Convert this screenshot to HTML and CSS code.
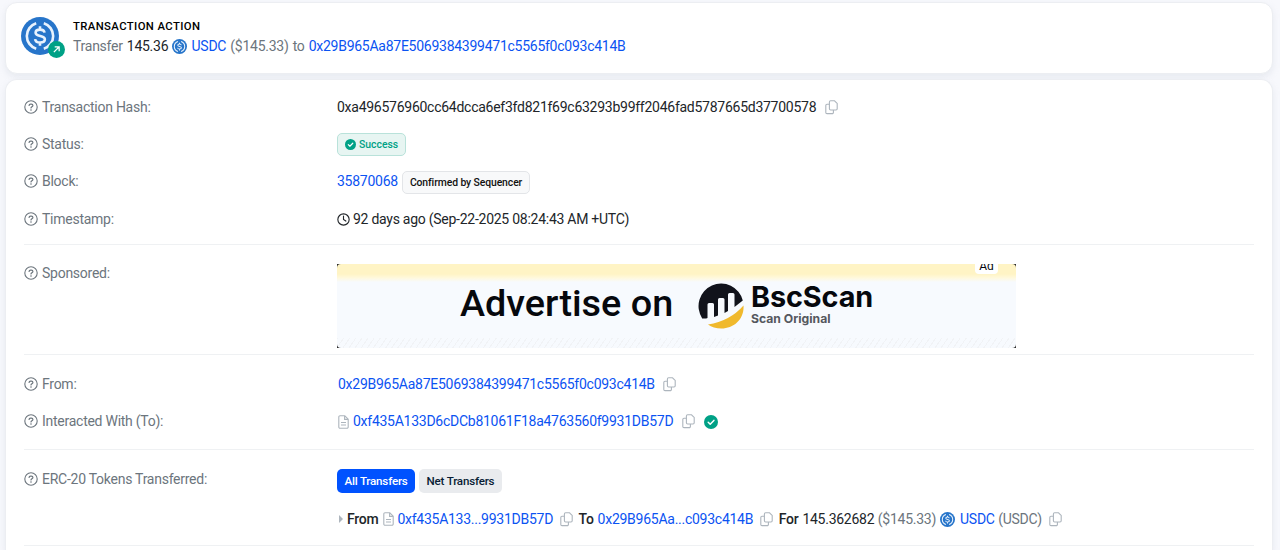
FILE: index.html
```html
<!DOCTYPE html>
<html lang="en">
<head>
    <meta charset="UTF-8">
    <title>Transaction Details</title>
    <link rel="stylesheet" href="styles.css">
</head>
<body>

    <svg class="sprite">
        <symbol id="help" viewBox="0 0 14 14">
            <circle cx="7" cy="7" r="6.2" fill="none" stroke="currentColor" stroke-width="1.1"/>
            <path d="M5.1 5.5c0-.9.7-1.4 1.5-1.4h.8c.9 0 1.5.6 1.5 1.4 0 1.3-1.9 1.4-1.9 2.5" fill="none" stroke="currentColor" stroke-width="1.2" stroke-linecap="round"/>
            <circle cx="7" cy="10" r=".8" fill="currentColor"/>
        </symbol>
        <symbol id="copy" viewBox="0 0 13 15">
            <path d="M5.6.8h3.9l2.7 2.6v5.4a1.2 1.2 0 0 1-1.2 1.2H5.6a1.2 1.2 0 0 1-1.2-1.2V2A1.2 1.2 0 0 1 5.6.8z" fill="none" stroke="currentColor" stroke-width="1.1"/>
            <path d="M4.4 4.2H2A1.2 1.2 0 0 0 .8 5.4v7A1.2 1.2 0 0 0 2 13.6h5.2a1.2 1.2 0 0 0 1.2-1.2V10" fill="none" stroke="currentColor" stroke-width="1.1"/>
        </symbol>
        <symbol id="file" viewBox="0 0 11 14">
            <path d="M2 .8h4.8l3.4 3.4V12a1.2 1.2 0 0 1-1.2 1.2H2A1.2 1.2 0 0 1 .8 12V2A1.2 1.2 0 0 1 2 .8zM6.6 1v3.4H10M3 7.5h5M3 10h5" fill="none" stroke="currentColor" stroke-width="1.1"/>
        </symbol>
        <symbol id="check" viewBox="0 0 14 14">
            <circle cx="7" cy="7" r="7" fill="#00a186"/>
            <path d="M4.2 7.2l2 2 3.7-3.8" fill="none" stroke="#fff" stroke-width="1.5" stroke-linecap="round" stroke-linejoin="round"/>
        </symbol>
        <symbol id="clock" viewBox="0 0 14 14">
            <circle cx="7" cy="7" r="6.1" fill="none" stroke="currentColor" stroke-width="1.2"/>
            <path d="M7 3.2V7l2.5 1.7" fill="none" stroke="currentColor" stroke-width="1.2" stroke-linecap="round"/>
        </symbol>
        <symbol id="usdc" viewBox="0 0 32 32">
            <circle cx="16" cy="16" r="16" fill="#2775ca"/>
            <g fill="none" stroke="#e8f2fd" stroke-width="2.2">
                <path d="M12.8 5.3a11.2 11.2 0 0 0 0 21.4M19.2 5.3a11.2 11.2 0 0 1 0 21.4"/>
                <path d="M19.8 13.2c-.2-1.8-1.7-2.6-3.8-2.6-2.3 0-3.7 1-3.7 2.6 0 3.8 7.8 1.7 7.8 5.6 0 1.7-1.6 2.7-4 2.7-2.6 0-4-1-4.2-2.9M16 7.8v3M16 21.3v3"/>
            </g>
        </symbol>
    </svg>

    <div class="card action">
        <div class="token">
            <svg class="token-logo"><use href="#usdc"/></svg>
            <svg class="token-badge" viewBox="0 0 16 16">
                <circle cx="8" cy="8" r="8" fill="#00a186"/>
                <path d="M5.5 10.5l4.8-4.8M6.3 5.5h4.2v4.2" fill="none" stroke="#fff" stroke-width="1.2"/>
            </svg>
        </div>
        <div>
            <h1>TRANSACTION ACTION</h1>
            <p class="summary"><span class="muted">Transfer</span> 145.36 <svg class="coin"><use href="#usdc"/></svg> <a>USDC</a> <span class="muted">($145.33) to</span> <a>0x29B965Aa87E5069384399471c5565f0c093c414B</a></p>
        </div>
    </div>

    <div class="card details">
        <div class="row">
            <div class="label"><svg class="help"><use href="#help"/></svg>Transaction Hash:</div>
            <div class="value"><span class="hash">0xa496576960cc64dcca6ef3fd821f69c63293b99ff2046fad5787665d37700578</span><svg class="copy"><use href="#copy"/></svg></div>
        </div>
        <div class="row">
            <div class="label"><svg class="help"><use href="#help"/></svg>Status:</div>
            <div class="value"><span class="badge success"><svg><use href="#check"/></svg>Success</span></div>
        </div>
        <div class="row">
            <div class="label"><svg class="help"><use href="#help"/></svg>Block:</div>
            <div class="value"><a>35870068</a><span class="badge sequencer">Confirmed by Sequencer</span></div>
        </div>
        <div class="row time">
            <div class="label"><svg class="help"><use href="#help"/></svg>Timestamp:</div>
            <div class="value"><svg class="clock"><use href="#clock"/></svg>92 days ago (Sep-22-2025 08:24:43 AM +UTC)</div>
        </div>
        <hr>
        <div class="row sponsored">
            <div class="label"><svg class="help"><use href="#help"/></svg>Sponsored:</div>
            <div class="banner">
                <span class="ad">Ad</span>
                <span class="headline">Advertise on</span>
                <svg class="bsc" viewBox="0 0 46 46">
                    <path d="M4.2 35.4A22.5 22.5 0 1 1 44.8 17.4L36.500 24V11.500q0-1.500-1.500-1.500h-3.500q-1.500 0-1.500 1.500V28l-3.500 2V16.500q0-1.500-1.500-1.500h-3.500q-1.500 0-1.500 1.500V32.500l-4 1.500V21.500q0-1.500-1.500-1.500h-3.500q-1.500 0-1.500 1.500v13.500q-2 .8-4.300.4z" fill="#11131b"/>
                    <path d="M10 41.500Q32 38 45.500 22.500C46.500 36 36 45.500 23.500 45.500 18 45.500 13.500 44 10 41.500z" fill="#f0b92d"/>
                </svg>
                <div class="brand">
                    <strong>BscScan</strong>
                    <small>Scan Original</small>
                </div>
            </div>
        </div>
        <hr>
        <div class="row from">
            <div class="label"><svg class="help"><use href="#help"/></svg>From:</div>
            <div class="value"><a>0x29B965Aa87E5069384399471c5565f0c093c414B</a><svg class="copy"><use href="#copy"/></svg></div>
        </div>
        <div class="row to">
            <div class="label"><svg class="help"><use href="#help"/></svg>Interacted With (To):</div>
            <div class="value"><svg class="file"><use href="#file"/></svg><a>0xf435A133D6cDCb81061F18a4763560f9931DB57D</a><svg class="copy"><use href="#copy"/></svg><svg class="verified"><use href="#check"/></svg></div>
        </div>
        <hr>
        <div class="row tokens">
            <div class="label"><svg class="help"><use href="#help"/></svg>ERC-20 Tokens Transferred:</div>
            <div>
                <div class="tabs">
                    <button class="active">All Transfers</button>
                    <button>Net Transfers</button>
                </div>
                <div class="transfer">
                    <i class="caret"></i>
                    <b>From</b>
                    <svg class="file"><use href="#file"/></svg>
                    <a>0xf435A133...9931DB57D</a>
                    <svg class="copy"><use href="#copy"/></svg>
                    <b class="to-word">To</b>
                    <a>0x29B965Aa...c093c414B</a>
                    <svg class="copy"><use href="#copy"/></svg>
                    <b class="for-word">For</b>
                    <span class="amount">145.362682</span>
                    <span class="muted usd">($145.33)</span>
                    <svg class="coin"><use href="#usdc"/></svg>
                    <a>USDC</a>
                    <span class="muted symbol">(USDC)</span>
                    <svg class="copy"><use href="#copy"/></svg>
                </div>
            </div>
        </div>
        <hr>
    </div>

</body>
</html>
```
FILE: styles.css
```css
* {
    box-sizing: border-box;
}

body {
    margin: 0;
    padding: 2px 7px 0 5px;
    height: 550px;
    overflow: hidden;
    background: #f7f8fc;
    font: 14px/20px Roboto, sans-serif;
    letter-spacing: -.26px;
    color: #212529;
}

h1, p {
    margin: 0;
}

a {
    color: #0b53f2;
}

svg {
    flex: none;
}

.sprite {
    display: none;
}

.muted {
    color: #6c757d;
}

.card {
    background: #fff;
    border: 1px solid #eceef2;
    border-radius: 12px;
    box-shadow: 0 3px 6px rgba(189, 197, 209, .25);
}

/* transaction action */
.action {
    height: 72px;
    display: flex;
    padding: 14px 15px;
}
.token {
    position: relative;
    width: 38px;
    margin-right: 14px;
}
.token-logo {
    display: block;
    width: 38px;
    height: 38px;
}
.token-badge {
    position: absolute;
    left: 27px;
    top: 24px;
    width: 17px;
    height: 17px;
}
.action h1 {
    font-size: 11.3px;
    line-height: 18px;
    font-weight: 500;
    letter-spacing: .4px;
    padding-top: 1px;
    color: #000;
}
.summary {
    word-spacing: .9px;
}
.coin {
    width: 15px;
    height: 15px;
    vertical-align: -3px;
}

/* details */
.details {
    height: 471px;
    margin-top: 5px;
    padding: 9px 18px 0;
    border-bottom: 0;
    border-radius: 12px 12px 0 0;
}
.details hr {
    margin: 0;
    border: 0;
    border-top: 1px solid #eff1f3;
}
.row {
    display: grid;
    grid-template-columns: 313px 1fr;
    height: 37px;
    line-height: 37px;
}
.label {
    display: flex;
    align-items: center;
    color: #6c757d;
}
.help {
    width: 14px;
    height: 14px;
    margin: -1px 4px 0 0;
}
.value {
    display: flex;
    align-items: center;
}
.copy {
    width: 13px;
    height: 15px;
    margin-left: 8.5px;
    color: #adb5bd;
}
.file {
    width: 11px;
    height: 14px;
    margin: 0 4px 0 1px;
    color: #adb5bd;
}
.clock {
    width: 13px;
    height: 13px;
    margin-right: 3px;
}
.badge {
    display: flex;
    align-items: center;
    height: 23px;
    padding: 0 7px;
    border: 1px solid #e3e5e8;
    border-radius: 5px;
    font-size: 10.4px;
    font-weight: 500;
    letter-spacing: 0;
}
.success {
    color: #00a186;
    background: #e7f5f2;
    border-color: #b9e2da;
}
.success svg {
    width: 11px;
    height: 11px;
    margin-right: 3px;
}
.sequencer {
    margin: 2px 0 0 4px;
    color: #111;
    background: #f8f9fa;
    letter-spacing: -.1px;
}
.time {
    height: 44px;
    padding-bottom: 6px;
}

/* sponsored */
.sponsored {
    height: 109px;
    padding-top: 19px;
}
.sponsored .label {
    height: 19px;
}
.banner {
    position: relative;
    isolation: isolate;
    display: flex;
    width: 679px;
    height: 84px;
    padding-left: 123px;
    overflow: hidden;
    background: #2b2b2b;
    line-height: 1;
    letter-spacing: 0;
    color: #06080d;
}
.banner::before {
    content: "";
    position: absolute;
    inset: 0;
    z-index: -1;
    border-radius: 4px;
    background:
        linear-gradient(#fff4c5 0 10px, #fff9dd 14px, #f7fafe 18px, transparent 18px),
        repeating-linear-gradient(125deg, #f1f3f6 0 1px, transparent 1px 5px) 0 100% / 100% 10px no-repeat,
        #f7fafe;
}
.ad {
    position: absolute;
    left: 638px;
    top: -8px;
    width: 23px;
    height: 18px;
    border-radius: 4px;
    background: #fff;
    font-size: 12px;
    line-height: 20px;
    text-align: center;
}
.headline {
    width: 238px;
    font-size: 37.8px;
    font-weight: 500;
    line-height: 79px;
}
.bsc {
    width: 46px;
    height: 46px;
    margin-top: 18.5px;
}
.brand {
    margin: 20px 0 0 7px;
    font-family: Inter, sans-serif;
}
.brand strong {
    display: block;
    font-size: 28.8px;
    font-weight: 700;
    line-height: 26px;
    letter-spacing: -.1px;
}
.brand small {
    display: block;
    font-size: 12.2px;
    font-weight: 700;
    line-height: 18px;
    color: #55585e;
}

/* addresses */
.from {
    margin-top: 10px;
}
.from .value {
    padding: 1px 0 0 1px;
}
.to {
    height: 47px;
    padding-bottom: 10px;
}
.to .value {
    padding-top: 1px;
}
.verified {
    width: 14px;
    height: 14px;
    margin-left: 9px;
}

/* token transfers */
.tokens {
    height: 95px;
    padding-top: 19px;
}
.tokens .label {
    height: 20px;
}
.tabs {
    display: flex;
    gap: 4px;
}
.tabs button {
    height: 24px;
    padding: 0 7.5px;
    border: 0;
    border-radius: 5px;
    background: #e9ebee;
    color: #081d35;
    font: 500 11.6px Roboto, sans-serif;
    letter-spacing: -.2px;
}
.tabs .active {
    background: #0052ff;
    color: #fff;
}
.transfer {
    display: flex;
    align-items: center;
    height: 24px;
    margin-top: 14px;
    line-height: 24px;
}
.transfer b {
    font-weight: 500;
}
.caret {
    margin: 0 4px 0 2px;
    border: solid transparent;
    border-width: 4px 0 4px 4px;
    border-left-color: #adb5bd;
}
.transfer .file {
    margin: 0 3px 0 5px;
}
.to-word, .for-word {
    margin: 0 4px 0 5.5px;
}
.usd, .symbol {
    margin-left: 3.5px;
}
.transfer .coin {
    margin: 0 5px 0 4px;
}
.transfer .copy {
    margin-left: 7px;
}
```
